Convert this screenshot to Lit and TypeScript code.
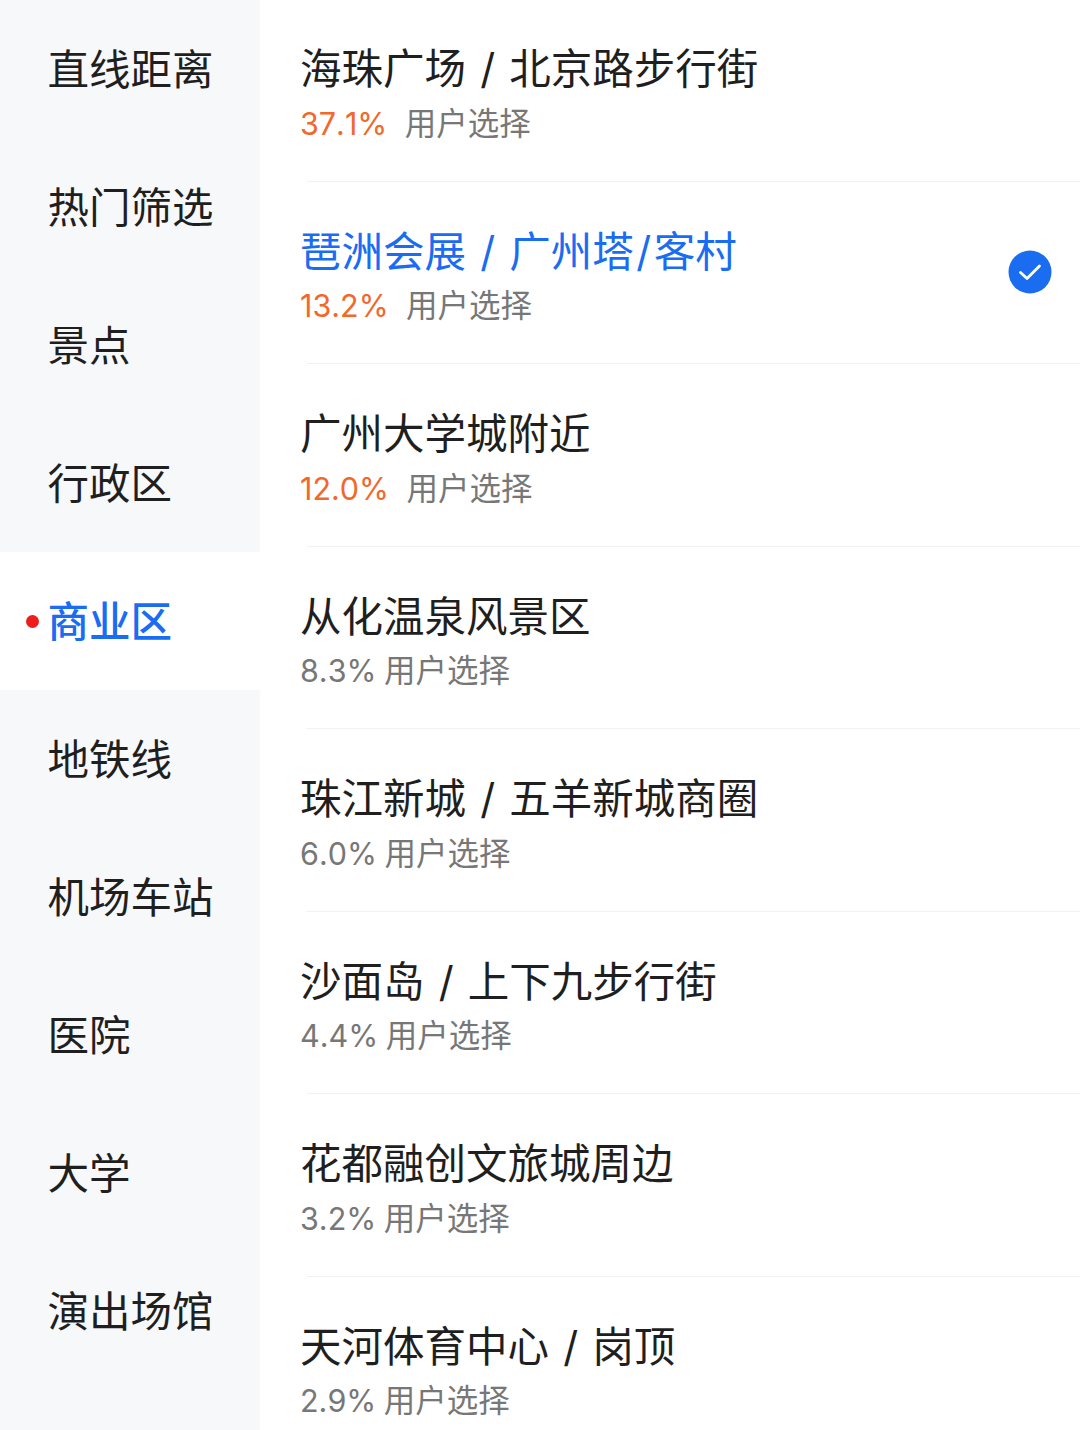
import { LitElement, css, html } from "lit";
import { customElement } from "lit/decorators.js";

const categories = ["直线距离", "热门筛选", "景点", "行政区", "商业区", "地铁线", "机场车站", "医院", "大学", "演出场馆"];

const places = [
  { name: "海珠广场 / 北京路步行街", pct: "37.1%", hot: true },
  { name: "琶洲会展 / 广州塔/客村", pct: "13.2%", hot: true, selected: true },
  { name: "广州大学城附近", pct: "12.0%", hot: true },
  { name: "从化温泉风景区", pct: "8.3%" },
  { name: "珠江新城 / 五羊新城商圈", pct: "6.0%" },
  { name: "沙面岛 / 上下九步行街", pct: "4.4%" },
  { name: "花都融创文旅城周边", pct: "3.2%" },
  { name: "天河体育中心 / 岗顶", pct: "2.9%" },
];

@customElement("app-root")
export class AppRoot extends LitElement {
  // the slash sits wider in the reference than in Inter
  _name(name: string) {
    const parts = name.split("/");
    return parts.map((part, i) =>
      i === 0 ? part : html`<span class="slash">/</span>${part}`
    );
  }

  render() {
    return html`
      <div class="page">
        <div class="side">
          ${categories.map(
            (c) => html`
              <div class="cat ${c === "商业区" ? "active" : ""}">
                ${c === "商业区" ? html`<span class="dot"></span>` : ""}${c}
              </div>
            `
          )}
        </div>
        <div class="list">
          ${places.map(
            (p) => html`
              <div class="row">
                <div class="text">
                  <div class="name ${p.selected ? "on" : ""}">${this._name(p.name)}</div>
                  <div class="sub">
                    <span class="pct ${p.hot ? "hot" : ""}">${p.pct}</span><span>用户选择</span>
                  </div>
                </div>
                ${p.selected
                  ? html`<svg class="check" viewBox="0 0 44 44">
                      <circle cx="22" cy="22" r="21.5" fill="#1a6cf0"></circle>
                      <path
                        d="M12.5 22.5L19 28.5L31.5 16"
                        fill="none"
                        stroke="#fff"
                        stroke-width="2.8"
                        stroke-linecap="round"
                        stroke-linejoin="round"
                      ></path>
                    </svg>`
                  : ""}
              </div>
            `
          )}
        </div>
      </div>
    `;
  }

  static styles = css`
    :host {
      display: block;
      font-family: "Inter", "Noto Sans CJK SC", sans-serif;
    }
    .page {
      display: flex;
      height: 1430px;
      overflow: hidden;
      background: #fff;
    }
    .side {
      width: 260px;
      flex: none;
      background: #f7f8fa;
    }
    .cat {
      position: relative;
      height: 138px;
      box-sizing: border-box;
      display: flex;
      align-items: center;
      padding: 0 0 4px 47.5px;
      font-size: 41.5px;
      color: #1f1f1f;
    }
    .cat.active {
      background: #fff;
      color: #1a6cf0;
      font-weight: 500;
    }
    .dot {
      position: absolute;
      left: 26px;
      top: 63px;
      width: 13px;
      height: 13px;
      border-radius: 50%;
      background: #f01c1c;
    }
    .list {
      flex: 1;
      padding-left: 40px;
      min-width: 0;
    }
    .row {
      position: relative;
      display: flex;
      justify-content: space-between;
      align-items: flex-start;
      height: 182.5px;
      box-sizing: border-box;
      padding-top: 42px;
    }
    .row::after {
      content: "";
      position: absolute;
      left: 7px;
      right: 0;
      bottom: 1px;
      height: 1px;
      background: #f1f1f3;
    }
    .row:last-child::after {
      display: none;
    }
    .name {
      font-size: 41.5px;
      line-height: 54px;
      color: #1f1f1f;
      white-space: nowrap;
    }
    .name.on {
      color: #1a6cf0;
    }
    .slash {
      margin: 0 2.5px;
    }
    .sub {
      display: flex;
      font-size: 31.5px;
      line-height: 54px;
      color: #777;
      white-space: nowrap;
      padding-top: 0.5px;
    }
    .pct {
      font-size: 30.5px;
      font-kerning: none;
      margin-right: 7.5px;
    }
    .pct.hot {
      color: #f2682a;
      margin-right: 17.5px;
    }
    .check {
      width: 44px;
      height: 44px;
      margin: 25.5px 28px 0 0;
    }
  `;
}
